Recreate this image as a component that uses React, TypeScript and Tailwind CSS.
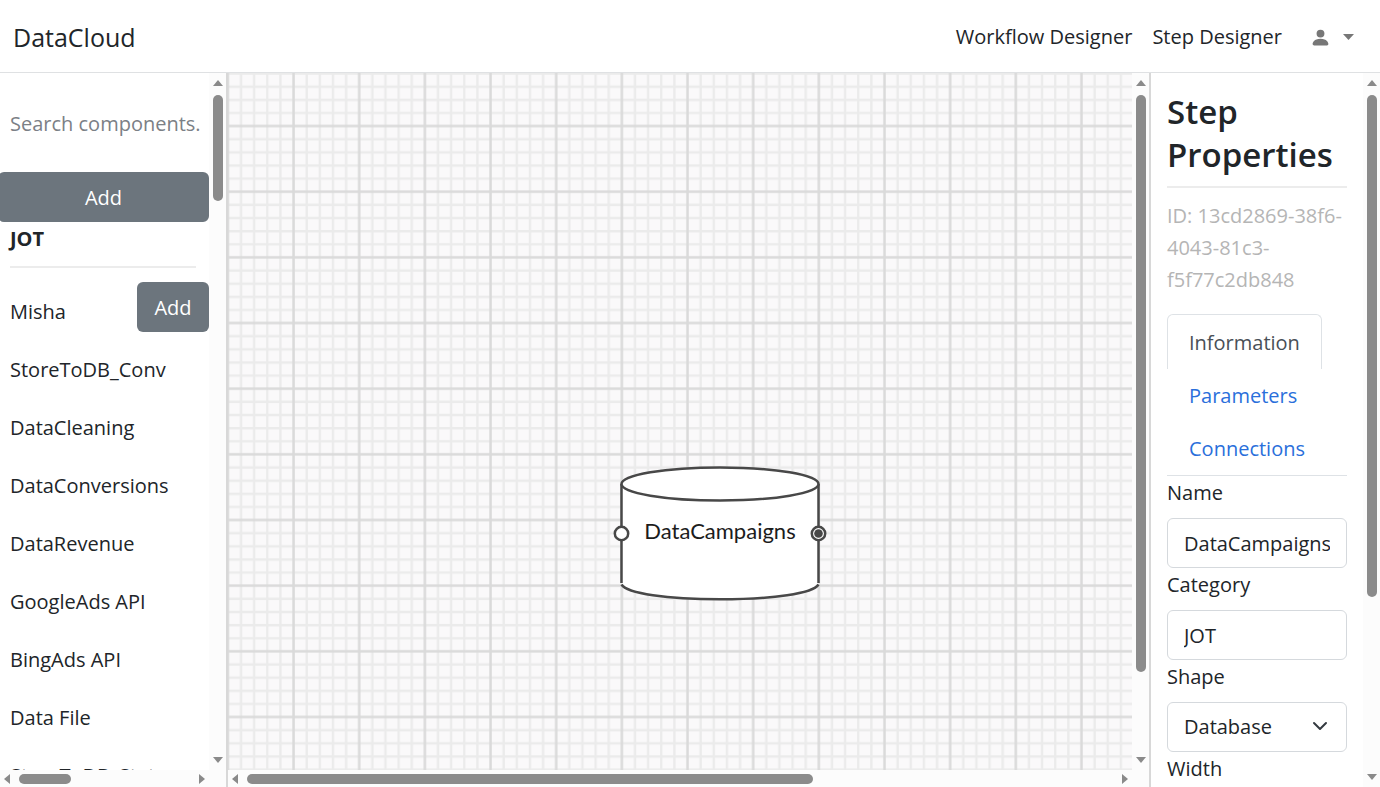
import React from "react";
import { BsPersonFill } from "react-icons/bs";

const components = [
  "StoreToDB_Conv",
  "DataCleaning",
  "DataConversions",
  "DataRevenue",
  "GoogleAds API",
  "BingAds API",
  "Data File",
  "StoreToDB_Stats",
];

function Arrow({ points, wide }: { points: string; wide: boolean }) {
  return (
    <svg
      width={wide ? 10 : 6}
      height={wide ? 6 : 10}
      viewBox={wide ? "0 0 10 6" : "0 0 6 10"}
      className="shrink-0 fill-[#8a8a8a]"
    >
      <polygon points={points} />
    </svg>
  );
}

function VerticalScrollbar({ size, corner = false }: { size: string; corner?: boolean }) {
  return (
    <div
      aria-hidden="true"
      className={`flex w-[17px] shrink-0 flex-col items-center gap-[9px] bg-[#fcfcfc] pt-[7px] ${corner ? "pb-6" : "pb-[7px]"}`}
    >
      <Arrow wide points="0,6 5,0 10,6" />
      <div className="min-h-0 flex-1">
        <div className="w-[10px] rounded-full bg-[#8b8b8b]" style={{ height: size }} />
      </div>
      <Arrow wide points="0,0 10,0 5,6" />
    </div>
  );
}

function HorizontalScrollbar({ size }: { size: string }) {
  return (
    <div aria-hidden="true" className="flex h-[17px] shrink-0 items-center gap-[9px] bg-[#fcfcfc] px-1">
      <Arrow wide={false} points="6,0 0,5 6,10" />
      <div className="min-w-0 flex-1">
        <div className="h-[10px] rounded-full bg-[#8b8b8b]" style={{ width: size }} />
      </div>
      <Arrow wide={false} points="0,0 6,5 0,10" />
    </div>
  );
}

function Header() {
  return (
    <header className="flex h-[73px] shrink-0 items-center justify-between border-b border-[#dfe1e3] pt-px pr-[26px] pl-[13px]">
      <a href="#home" className="text-[25px] leading-8">
        DataCloud
      </a>
      <nav className="flex items-center gap-5 pt-px">
        <a href="#workflow">Workflow Designer</a>
        <a href="#step">Step Designer</a>
        <button type="button" aria-label="Account" className="ml-2 flex items-center gap-3 text-[#777777]">
          <BsPersonFill size={21} />
          <svg width="11" height="6" viewBox="0 0 11 6" className="fill-current">
            <polygon points="0,0 11,0 5.5,6" />
          </svg>
        </button>
      </nav>
    </header>
  );
}

function Sidebar() {
  return (
    <aside className="flex w-[228px] shrink-0 border-r-2 border-[#d8d8d8]">
      <div className="flex min-w-0 flex-1 flex-col">
        <div className="min-h-0 flex-1 overflow-hidden">
          <div className="pt-[25px] pl-[10px]">
            <input
              type="text"
              aria-label="Search components"
              placeholder="Search components."
              className="h-[50px] w-full outline-none placeholder:text-[#7b8086] placeholder:opacity-100"
            />
          </div>
          <div className="-ml-0.5 pt-6">
            <button type="button" className="h-[50px] w-full rounded-md bg-[#6c757d] pt-[2px] text-white">
              Add
            </button>
          </div>
          <h2 className="mr-[13px] ml-[10px] h-[46px] border-b-2 border-[#ececec] pt-px text-[20px] leading-8 font-bold">
            JOT
          </h2>
          <ul className="pt-[14px]">
            <li className="flex h-[59px] items-start justify-between pl-[10px]">
              <span className="pt-[14px]">Misha</span>
              <button type="button" className="h-[50px] w-[72px] rounded-md bg-[#6c757d] pt-[2px] text-white">
                Add
              </button>
            </li>
            {components.map((name) => (
              <li key={name} className="h-[58px] pt-[13px] pl-[10px] whitespace-nowrap">
                {name}
              </li>
            ))}
          </ul>
        </div>
        <HorizontalScrollbar size="30.6%" />
      </div>
      <VerticalScrollbar size="16.2%" corner />
    </aside>
  );
}

const minor = [13.13, 26.26, 39.4, 52.53];

function Grid() {
  return (
    <svg aria-hidden="true" className="absolute inset-0 h-full w-full">
      <defs>
        <pattern id="grid" x="-32.5" y="20.7" width="65.66" height="65.66" patternUnits="userSpaceOnUse">
          <g transform="translate(32.4 32.4)">
            {minor.map((m) => {
              const p = m > 32 ? m - 65.66 : m;
              return <path key={m} d={`M${p} -33V34M-33 ${p}H34`} stroke="#ebebeb" strokeWidth="2.4" />;
            })}
            <path d="M0 -33V34M-33 0H34" stroke="#dadada" strokeWidth="2.5" />
          </g>
        </pattern>
      </defs>
      <rect width="100%" height="100%" fill="#faf9fa" />
      <rect width="100%" height="100%" fill="url(#grid)" />
    </svg>
  );
}

function DatabaseNode() {
  return (
    <div className="absolute top-[392px] left-[384px] flex h-[136px] w-[216px] items-center justify-center pb-1">
      <svg width="216" height="136" viewBox="0 0 216 136" className="absolute inset-0">
        <path
          d="M9.500 19 V118.500 C9.500 128 54 134.500 108 134.500 C162 134.500 206.500 128 206.500 118.500 V19Z"
          fill="#fff"
        />
        <path d="M9.500 19V118M206.500 19V118" fill="none" stroke="#484848" strokeWidth="2.500" />
        <path d="M9.500 119.500C15 128.500 55 134.300 108 134.300C161 134.300 201 128.500 206.500 119.500" fill="none" stroke="#484848" strokeWidth="2.500" />
        <ellipse cx="108" cy="19" rx="98.500" ry="16.500" fill="#fff" stroke="#484848" strokeWidth="2.500" />
        <circle cx="9.500" cy="68.500" r="6.700" fill="#fff" stroke="#484848" strokeWidth="2.500" />
        <circle cx="206.500" cy="68.500" r="6.700" fill="#fff" stroke="#484848" strokeWidth="2.500" />
        <circle cx="206.500" cy="68.500" r="4.300" fill="#484848" />
      </svg>
      <span className="relative font-['Lato',sans-serif] text-[22px] leading-6 text-[#1c1c1c]">DataCampaigns</span>
    </div>
  );
}

function Canvas() {
  return (
    <main className="flex min-w-0 flex-1">
      <div className="flex min-w-0 flex-1 flex-col">
        <div className="relative min-h-0 flex-1 overflow-hidden">
          <Grid />
          <DatabaseNode />
        </div>
        <HorizontalScrollbar size="65.4%" />
      </div>
      <VerticalScrollbar size="88.4%" corner />
    </main>
  );
}

const label = "block pt-px pb-[9px] leading-8";
const field = "block h-[50px] w-full rounded-md border border-[#d5d9dd] bg-white px-4 outline-none";

function Properties() {
  return (
    <aside className="flex w-[231px] shrink-0 border-l-2 border-[#d8d8d8]">
      <div className="min-w-0 flex-1 overflow-hidden px-4 pt-[17px]">
        <h1 className="border-b-2 border-[#ececec] pb-[10px] text-[33px] leading-[43px] font-semibold">
          Step Properties
        </h1>
        <p className="pt-3 leading-8 text-[#b5b5b5]">
          ID: 13cd2869-38f6-
          <br />
          4043-81c3-
          <br />
          f5f77c2db848
        </p>
        <div role="tablist" className="flex flex-col items-start border-b border-[#dee2e6] pt-[18px]">
          <button
            type="button"
            role="tab"
            aria-selected="true"
            className="h-[55px] rounded-t-md border border-b-0 border-[#dee2e6] px-[21px] pt-px text-[#495057]"
          >
            Information
          </button>
          <button type="button" role="tab" className="h-[53px] px-[22px] pt-px text-[#2a6fdb]">
            Parameters
          </button>
          <button type="button" role="tab" className="h-[53px] px-[22px] pt-px text-[#2a6fdb]">
            Connections
          </button>
        </div>
        <label htmlFor="name" className={label}>
          Name
        </label>
        <input id="name" type="text" defaultValue="DataCampaigns" className={field} />
        <label htmlFor="category" className={label}>
          Category
        </label>
        <input id="category" type="text" defaultValue="JOT" className={field} />
        <label htmlFor="shape" className={label}>
          Shape
        </label>
        <div className="relative">
          <select id="shape" className={`${field} appearance-none`}>
            <option>Database</option>
          </select>
          <svg
            width="16"
            height="16"
            viewBox="0 0 16 16"
            className="pointer-events-none absolute top-4 right-[19px] fill-none stroke-[#343a40] stroke-2"
          >
            <path d="M2 5l6 6 6-6" strokeLinecap="round" strokeLinejoin="round" />
          </svg>
        </div>
        <label htmlFor="width" className={label}>
          Width
        </label>
        <input id="width" type="text" className={field} />
      </div>
      <VerticalScrollbar size="74.9%" />
    </aside>
  );
}

export default function App() {
  return (
    <div className="flex h-screen flex-col overflow-hidden bg-white font-['Open_Sans',sans-serif] text-[20px] leading-8 text-[#212529]">
      <Header />
      <div className="flex min-h-0 flex-1">
        <Sidebar />
        <Canvas />
        <Properties />
      </div>
    </div>
  );
}
